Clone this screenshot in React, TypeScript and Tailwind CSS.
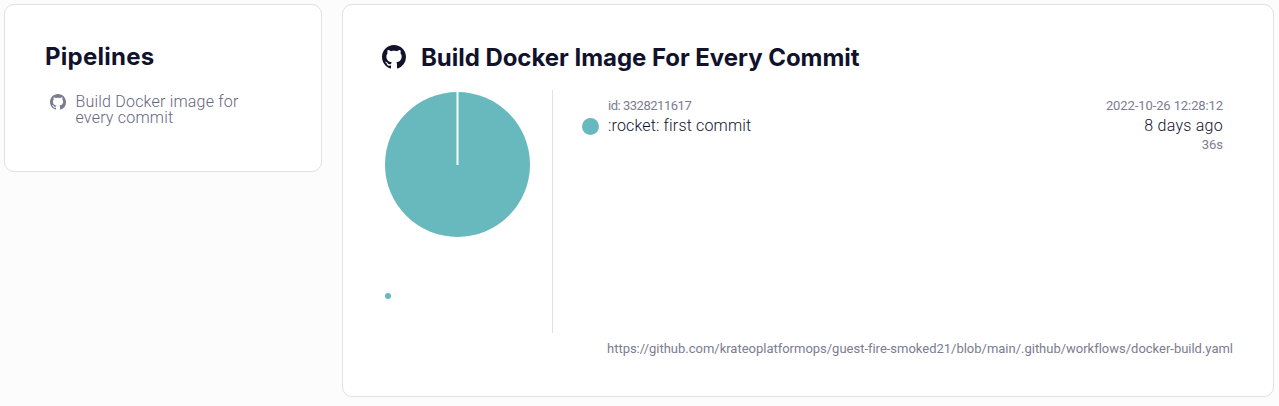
function GithubMark({ className }: { className: string }) {
  return (
    <svg viewBox="0 0 16 16" fill="currentColor" className={className} aria-hidden="true">
      <path d="M8 0C3.58 0 0 3.58 0 8c0 3.54 2.29 6.53 5.47 7.59.4.07.55-.17.55-.38 0-.19-.01-.82-.01-1.49-2.01.37-2.53-.49-2.69-.94-.09-.23-.48-.94-.82-1.13-.28-.15-.68-.52-.01-.53.63-.01 1.08.58 1.23.82.72 1.21 1.87.87 2.33.66.07-.52.28-.87.51-1.07-1.78-.2-3.64-.89-3.64-3.95 0-.87.31-1.59.82-2.15-.08-.2-.36-1.02.08-2.12 0 0 .67-.21 2.2.82.64-.18 1.32-.27 2-.27s1.36.09 2 .27c1.53-1.04 2.2-.82 2.2-.82.44 1.1.16 1.92.08 2.12.51.56.82 1.27.82 2.15 0 3.07-1.87 3.75-3.65 3.95.29.25.54.73.54 1.48 0 1.07-.01 1.93-.01 2.2 0 .21.15.46.55.38A8.01 8.01 0 0 0 16 8c0-4.42-3.58-8-8-8Z" />
    </svg>
  );
}

function RunsChart() {
  return (
    <svg viewBox="0 0 145 145" className="block size-[145px]" aria-hidden="true">
      <circle cx="72.5" cy="72.5" r="72.5" fill="#68b9be" />
      <path d="M72.5 0V73" stroke="#fff" strokeWidth="2" />
    </svg>
  );
}

function PipelineList() {
  return (
    <aside className="h-[168px] w-[318px] shrink-0 rounded-[10px] border border-[#e1e1e3] bg-white px-10 pt-9">
      <h2 className="font-['Inter','Liberation_Sans',sans-serif] text-2xl leading-8 font-bold tracking-[0.25px] text-[#11122b]">
        Pipelines
      </h2>
      <div className="mt-[21px] flex gap-[9.5px] pl-[5px] text-[#7c7c90]">
        <GithubMark className="size-4 shrink-0" />
        <p className="text-base leading-4 font-light tracking-[0.2px] text-[#66667e]">
          Build Docker image for
          <br />
          every commit
        </p>
      </div>
    </aside>
  );
}

function CommitRun() {
  return (
    <div className="flex flex-1 items-start pt-[5px] pr-[10px] pl-[29px]">
      <span className="mt-[22.5px] mr-[9px] size-[17px] shrink-0 rounded-full bg-[#68b9be]" />
      <div className="flex-1">
        <p className="text-[13px] leading-[21px] font-normal tracking-[-0.48px] text-[#7c7c90]">id: 3328211617</p>
        <p className="text-base leading-5 tracking-[0.16px] text-[#11122b]">:rocket: first commit</p>
      </div>
      <div className="text-right">
        <p className="text-[13px] leading-[21px] font-normal tracking-[-0.1px] text-[#7c7c90]">2022-10-26 12:28:12</p>
        <p className="text-base leading-5 tracking-[0.26px] text-[#11122b]">8 days ago</p>
        <p className="text-[13px] leading-[18px] font-normal text-[#7c7c90]">36s</p>
      </div>
    </div>
  );
}

function PipelineDetail() {
  return (
    <main className="h-[393px] w-[932px] shrink-0 rounded-[10px] border border-[#e1e1e3] bg-white px-10 pt-9">
      <header className="flex h-[49px] items-start text-[#11122b]">
        <GithubMark className="mt-1 -ml-px size-6" />
        <h1 className="ml-[15px] font-['Inter','Liberation_Sans',sans-serif] text-2xl leading-[34px] font-bold tracking-[-0.04px]">
          Build Docker Image For Every Commit
        </h1>
      </header>
      <section className="flex h-[243px] font-light">
        <div className="w-[170px] shrink-0 border-r border-[#e1e1e3] pt-[2px] pl-[2px]">
          <RunsChart />
          <span className="mt-14 block size-[6px] rounded-full bg-[#68b9be]" />
        </div>
        <CommitRun />
      </section>
      <p className="mt-1.5 text-right text-[13px] leading-5 tracking-[-0.012px] text-[#7c7c90]">
        https://github.com/krateoplatformops/guest-fire-smoked21/blob/main/.github/workflows/docker-build.yaml
      </p>
    </main>
  );
}

export default function App() {
  return (
    <div className="flex h-screen items-start gap-5 overflow-hidden bg-[#fcfcfc] p-1 font-['Roboto','Liberation_Sans',sans-serif]">
      <PipelineList />
      <PipelineDetail />
    </div>
  );
}
